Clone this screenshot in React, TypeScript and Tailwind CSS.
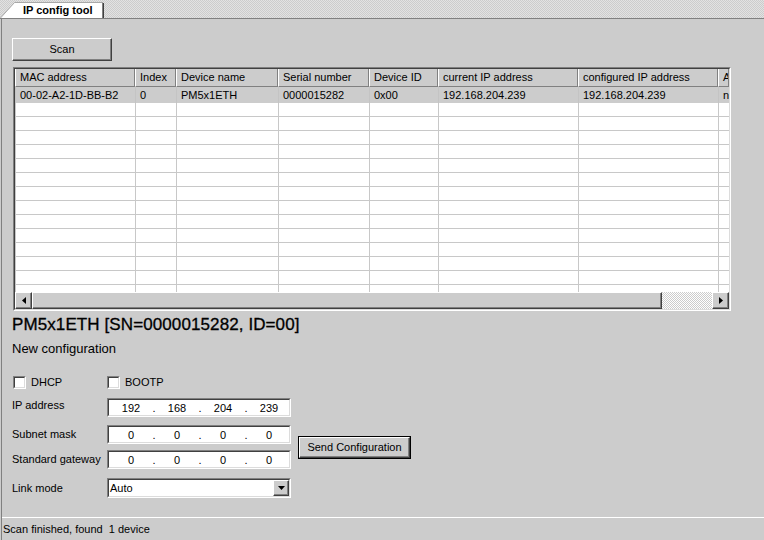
import React from 'react';

const columns = [
  { title: 'MAC address', value: '00-02-A2-1D-BB-B2', width: 'w-[120px]' },
  { title: 'Index', value: '0', width: 'w-[41px]' },
  { title: 'Device name', value: 'PM5x1ETH', width: 'w-[102px]' },
  { title: 'Serial number', value: '0000015282', width: 'w-[91px]' },
  { title: 'Device ID', value: '0x00', width: 'w-[69px]' },
  { title: 'current IP address', value: '192.168.204.239', width: 'w-[140px]' },
  { title: 'configured IP address', value: '192.168.204.239', width: 'w-[140px]' },
  { title: 'ARP', value: 'no', width: 'flex-1 min-w-0' },
];

const emptyRows = Array.from({ length: 14 }, (_, i) => i);

const raised = 'border border-t-white border-l-white border-b-[#404040] border-r-[#404040] shadow-[inset_-1px_-1px_0_#808080]';

const Sunken = ({ className, children }: { className: string; children?: React.ReactNode }) => (
  <div className={`flex border border-t-[#808080] border-l-[#808080] border-b-white border-r-white ${className}`}>
    <div className="flex flex-1 min-w-0 border border-t-[#404040] border-l-[#404040] border-b-[#dcdcdc] border-r-[#dcdcdc] bg-white">
      {children}
    </div>
  </div>
);

const IpField = ({ octets }: { octets: string[] }) => (
  <Sunken className="w-[184px] h-[19px]">
    <div className="flex pl-[5px] pt-[2px]">
      {octets.map((o, i) => (
        <React.Fragment key={i}>
          {i > 0 && <span className="w-[12px] text-center">.</span>}
          <span className="w-[34px] text-center">{o}</span>
        </React.Fragment>
      ))}
    </div>
  </Sunken>
);

const Arrow = ({ dir }: { dir: 'left' | 'right' | 'down' }) => {
  if (dir === 'down')
    return (
      <svg width="7" height="4" viewBox="0 0 7 4">
        <polygon points="0,0 7,0 3.5,4" fill="#000" />
      </svg>
    );
  return (
    <svg width="4" height="7" viewBox="0 0 4 7">
      <polygon points={dir === 'left' ? '4,0 0,3.5 4,7' : '0,0 4,3.5 0,7'} fill="#000" />
    </svg>
  );
};

const Checkbox = ({ label }: { label: string }) => (
  <div className="flex items-center gap-[5px]">
    <Sunken className="w-[13px] h-[13px]" />
    <span>{label}</span>
  </div>
);

export default function App() {
  return (
    <div className="w-[764px] h-[540px] overflow-hidden flex flex-col bg-[#cccccc] text-black text-[11px] leading-[13px] font-['Liberation_Sans',Arial,sans-serif]">
      {/* tab strip */}
      <div className="h-[19px] shrink-0 border-b border-[#808080] bg-[image:repeating-conic-gradient(#e2e2e2_0_25%,#cccccc_0_50%)] bg-[length:2px_2px]">
        <div className="relative w-[106px] h-[18px]">
          <svg className="absolute inset-0" width="106" height="18" viewBox="0 0 106 18">
            <polygon points="0.5,18 14.5,2.5 102.5,2.5 102.5,18" fill="#ffffff" />
            <polyline points="0.5,18 14.5,2.5 102.5,2.5" fill="none" stroke="#a8a8a8" />
            <line x1="102.5" y1="2.5" x2="102.5" y2="18" stroke="#808080" />
            <line x1="103.5" y1="3" x2="103.5" y2="18" stroke="#404040" />
          </svg>
          <div className="relative pl-[23px] pt-[4px] font-bold">IP config tool</div>
        </div>
      </div>

      <div className="flex-1 flex flex-col ml-px border-l border-[#808080]">
        <div className="flex-1 flex flex-col pl-[10px] pt-[19px]">
          <button className={`w-[100px] h-[23px] bg-[#cccccc] flex items-center justify-center ${raised}`}>Scan</button>

          {/* device list */}
          <div className="mt-[6px] ml-px w-[718px] h-[244px] flex border border-t-[#808080] border-l-[#808080] border-b-white border-r-white">
            <div className="flex-1 flex flex-col border border-t-[#404040] border-l-[#404040] border-b-[#dcdcdc] border-r-[#dcdcdc] bg-white overflow-hidden">
              <div className="flex h-[18px] shrink-0 bg-[#cccccc]">
                {columns.map((c) => (
                  <div key={c.title} className={`${c.width} flex items-center whitespace-nowrap overflow-hidden pl-[4px] border-l border-l-white border-r border-r-[#808080] border-b border-b-[#808080]`}>
                    {c.title}
                  </div>
                ))}
              </div>
              <div className="h-[205px] shrink-0 overflow-hidden">
                <div className="flex h-[16px] bg-[#cccccc]">
                  {columns.map((c) => (
                    <div key={c.title} className={`${c.width} flex items-center whitespace-nowrap overflow-hidden pl-[4px] border-l border-l-[#c4c4c4]`}>
                      {c.value}
                    </div>
                  ))}
                </div>
                {emptyRows.map((r) => (
                  <div key={r} className="flex h-[14px] border-b border-[#c8c8c8]">
                    {columns.map((c) => (
                      <div key={c.title} className={`${c.width} border-l border-l-[#c8c8c8]`} />
                    ))}
                  </div>
                ))}
              </div>
              {/* horizontal scrollbar */}
              <div className="flex h-[17px] shrink-0">
                <div className={`w-[17px] bg-[#cccccc] flex items-center justify-center ${raised}`}>
                  <Arrow dir="left" />
                </div>
                <div className={`w-[630px] bg-[#cccccc] ${raised}`} />
                <div className="flex-1 bg-[image:repeating-conic-gradient(#ffffff_0_25%,#cccccc_0_50%)] bg-[length:2px_2px]" />
                <div className={`w-[17px] bg-[#cccccc] flex items-center justify-center ${raised}`}>
                  <Arrow dir="right" />
                </div>
              </div>
            </div>
          </div>

          <div className="mt-[4px] text-[17px] leading-[20px] tracking-[0.1px] whitespace-nowrap [-webkit-text-stroke:0.3px_#000]">PM5x1ETH [SN=0000015282, ID=00]</div>
          <div className="mt-[6px] text-[13px] leading-[16px]">New configuration</div>

          <div className="mt-[19px] grid grid-cols-[95px_auto]">
            <div className="ml-px"><Checkbox label="DHCP" /></div>
            <Checkbox label="BOOTP" />
          </div>

          <div className="mt-[9px] flex items-start">
            <div className="flex flex-col">
              <div className="flex items-center">
                <span className="w-[95px] mb-[5px]">IP address</span>
                <IpField octets={['192', '168', '204', '239']} />
              </div>
              <div className="flex items-center mt-[8px]">
                <span className="w-[95px]">Subnet mask</span>
                <IpField octets={['0', '0', '0', '0']} />
              </div>
              <div className="flex items-center mt-[6px]">
                <span className="w-[95px]">Standard gateway</span>
                <IpField octets={['0', '0', '0', '0']} />
              </div>
              <div className="flex items-center mt-[9px]">
                <span className="w-[95px]">Link mode</span>
                <Sunken className="w-[184px] h-[20px]">
                  <div className="flex-1 flex items-center pl-px">Auto</div>
                  <div className={`w-[16px] bg-[#cccccc] flex items-center justify-center ${raised}`}>
                    <Arrow dir="down" />
                  </div>
                </Sunken>
              </div>
            </div>
            <button className="ml-[7px] mt-[38px] w-[113px] h-[23px] border border-black flex">
              <span className={`flex-1 flex items-center justify-center bg-[#cccccc] ${raised}`}>Send Configuration</span>
            </button>
          </div>
        </div>

        {/* status bar */}
        <div className="h-[23px] shrink-0 border-t border-white pl-px pt-[5px] whitespace-pre">Scan finished, found  1 device</div>
      </div>
    </div>
  );
}
